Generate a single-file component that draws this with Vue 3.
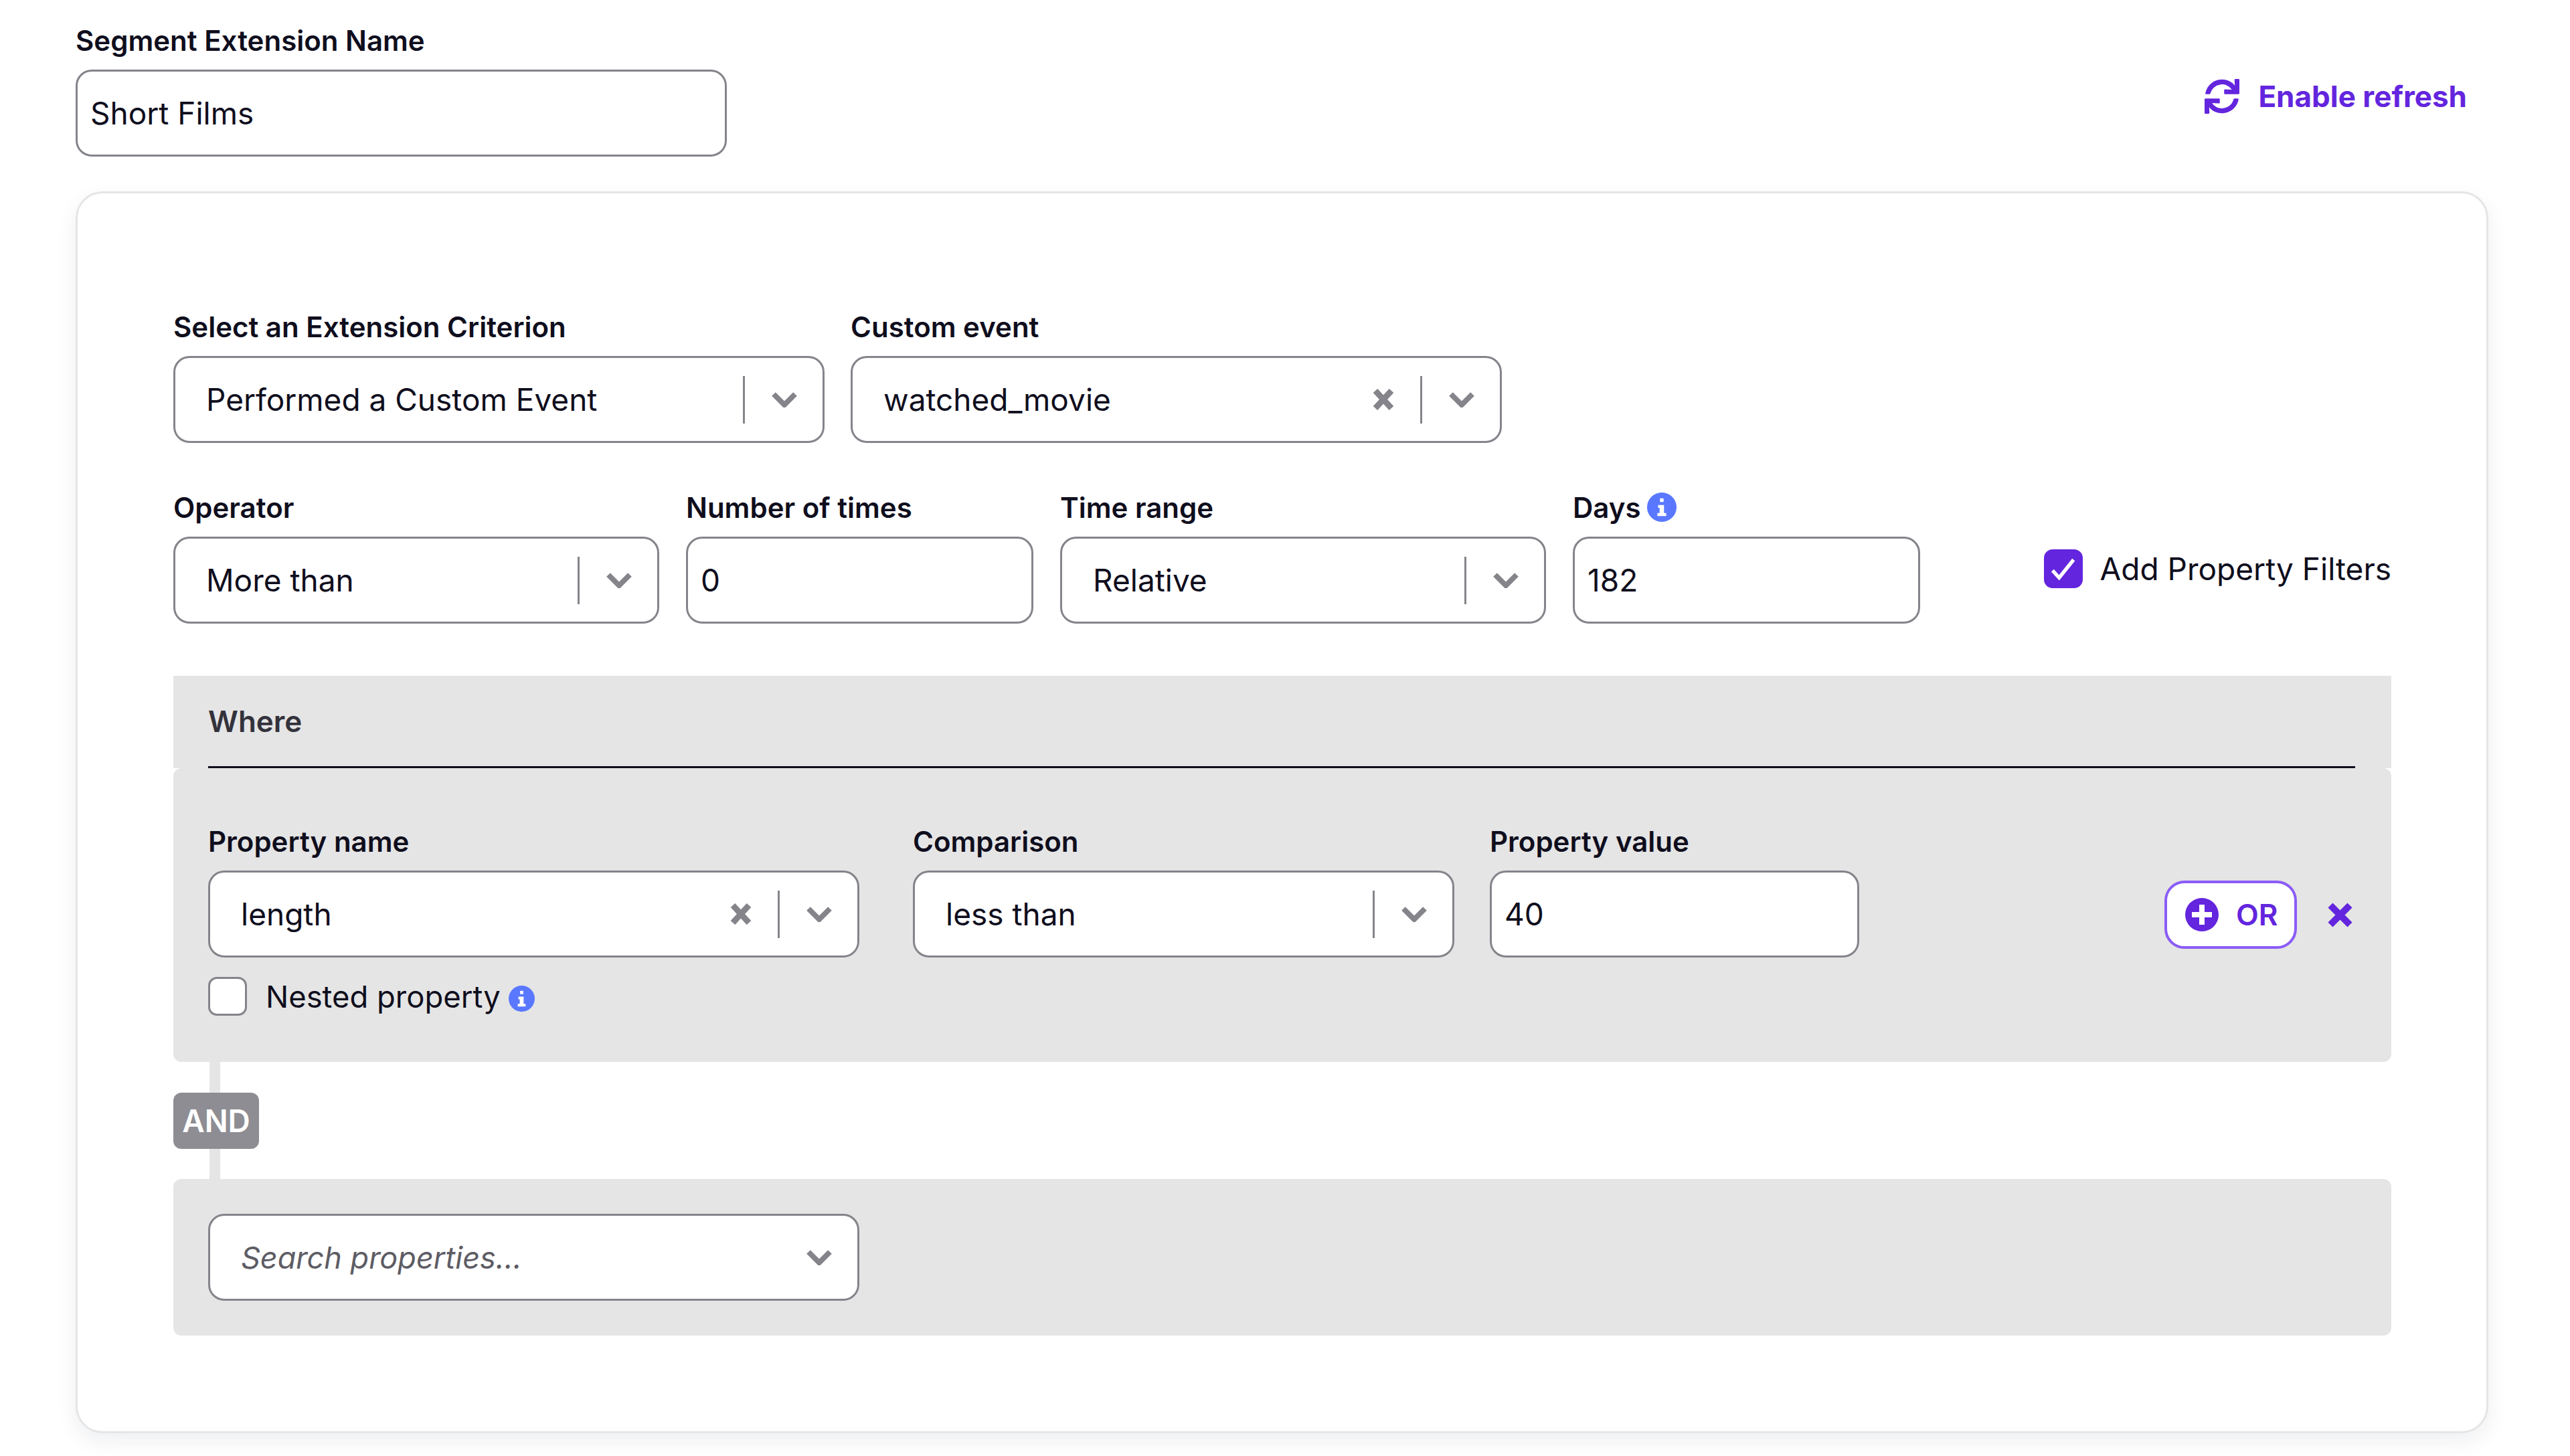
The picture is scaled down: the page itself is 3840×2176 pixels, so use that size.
<script setup>
const syncPath = 'M440.65 12.57l4 82.77A247.16 247.16 0 0 0 255.83 8C134.73 8 33.91 94.92 12.29 209.82A12 12 0 0 0 24.09 224h49.05a12 12 0 0 0 11.67-9.26 175.91 175.91 0 0 1 317-56.94l-101.46-4.86a12 12 0 0 0-12.57 12v47.41a12 12 0 0 0 12 12H500a12 12 0 0 0 12-12V12a12 12 0 0 0-12-12h-47.37a12 12 0 0 0-11.98 12.57zM255.83 432a175.61 175.61 0 0 1-146-77.8l101.8 4.87a12 12 0 0 0 12.57-12v-47.4a12 12 0 0 0-12-12H12a12 12 0 0 0-12 12V500a12 12 0 0 0 12 12h47.35a12 12 0 0 0 12-12.6l-4.15-82.57A247.17 247.17 0 0 0 255.83 504c121.11 0 221.93-86.92 243.55-201.82a12 12 0 0 0-11.8-14.18h-49.05a12 12 0 0 0-11.67 9.26A175.86 175.86 0 0 1 255.83 432z'
</script>

<template>
  <div class="page">
    <div class="top">
      <div class="field name-field">
        <label class="label">Segment Extension Name</label>
        <div class="box input">Short Films</div>
      </div>
      <button class="refresh">
        <svg class="refresh-icon" viewBox="0 0 512 512"><path fill="#6325de" :d="syncPath" /></svg>
        Enable refresh
      </button>
    </div>

    <div class="card">
      <div class="row row-first">
        <div class="field w-973">
          <label class="label">Select an Extension Criterion</label>
          <div class="box select">
            <span class="value">Performed a Custom Event</span>
            <i class="divider"></i>
            <svg class="chevron" viewBox="0 0 38 23"><path d="M3 3l16 16L35 3" /></svg>
          </div>
        </div>
        <div class="field w-973">
          <label class="label">Custom event</label>
          <div class="box select">
            <span class="value">watched_movie</span>
            <svg class="clear" viewBox="0 0 32 32"><path d="M4 3l24 26M28 3L4 29" /></svg>
            <i class="divider"></i>
            <svg class="chevron" viewBox="0 0 38 23"><path d="M3 3l16 16L35 3" /></svg>
          </div>
        </div>
      </div>

      <div class="row row-second">
        <div class="field w-726">
          <label class="label">Operator</label>
          <div class="box select">
            <span class="value">More than</span>
            <i class="divider"></i>
            <svg class="chevron" viewBox="0 0 38 23"><path d="M3 3l16 16L35 3" /></svg>
          </div>
        </div>
        <div class="field w-519">
          <label class="label">Number of times</label>
          <div class="box input">0</div>
        </div>
        <div class="field w-726">
          <label class="label">Time range</label>
          <div class="box select">
            <span class="value">Relative</span>
            <i class="divider"></i>
            <svg class="chevron" viewBox="0 0 38 23"><path d="M3 3l16 16L35 3" /></svg>
          </div>
        </div>
        <div class="field w-519">
          <label class="label">Days
            <svg class="info" viewBox="0 0 40 40">
              <circle cx="20" cy="20" r="20" fill="#5a78ff" />
              <rect x="17.5" y="8" width="5" height="5" rx="1" fill="#fff" />
              <path d="M15 17h8v11h3v4H14v-4h3v-7h-2z" fill="#fff" />
            </svg>
          </label>
          <div class="box input">182</div>
        </div>
        <div class="check-wrap">
          <span class="check checked">
            <svg viewBox="0 0 58 58"><path d="M11 32l11 12L46 14" /></svg>
          </span>
          <span class="check-text">Add Property Filters</span>
        </div>
      </div>

      <div class="where-head">
        <div class="where-title">Where</div>
      </div>
      <div class="where-body">
        <div class="prop-row">
          <div class="field w-973">
            <label class="label">Property name</label>
            <div class="box select">
              <span class="value">length</span>
              <svg class="clear" viewBox="0 0 32 32"><path d="M4 3l24 26M28 3L4 29" /></svg>
              <i class="divider"></i>
              <svg class="chevron" viewBox="0 0 38 23"><path d="M3 3l16 16L35 3" /></svg>
            </div>
          </div>
          <div class="field w-809">
            <label class="label">Comparison</label>
            <div class="box select">
              <span class="value">less than</span>
              <i class="divider"></i>
              <svg class="chevron" viewBox="0 0 38 23"><path d="M3 3l16 16L35 3" /></svg>
            </div>
          </div>
          <div class="field w-552">
            <label class="label">Property value</label>
            <div class="box input">40</div>
          </div>
          <div class="or-wrap">
            <button class="or-btn">
              <svg class="or-plus" viewBox="0 0 50 50">
                <circle cx="25" cy="25" r="25" fill="#6325de" />
                <path d="M21 10h8v11h11v8H29v11h-8V29H10v-8h11z" fill="#fff" />
              </svg>
              OR
            </button>
            <svg class="or-remove" viewBox="0 0 37 37"><path d="M4 4l29 29M33 4L4 33" /></svg>
          </div>
        </div>
        <div class="nested">
          <span class="check"></span>
          <span class="check-text">Nested property</span>
          <svg class="info info-small" viewBox="0 0 40 40">
            <circle cx="20" cy="20" r="20" fill="#5a78ff" />
            <rect x="17.5" y="8" width="5" height="5" rx="1" fill="#fff" />
            <path d="M15 17h8v11h3v4H14v-4h3v-7h-2z" fill="#fff" />
          </svg>
        </div>
      </div>

      <div class="connector">
        <span class="and">AND</span>
      </div>

      <div class="search-block">
        <div class="box select w-973">
          <span class="value placeholder">Search properties...</span>
          <svg class="chevron" viewBox="0 0 38 23"><path d="M3 3l16 16L35 3" /></svg>
        </div>
      </div>
    </div>
  </div>
</template>

<style scoped>
.page {
  box-sizing: border-box;
  width: 3840px;
  height: 2176px;
  padding: 30px 122px 0 113px;
  overflow: hidden;
  background: #fff;
  font-family: Inter, "Liberation Sans", sans-serif;
  font-size: 46px;
  color: #0f0e1d;
}

.top {
  display: flex;
  justify-content: space-between;
  align-items: center;
}

.name-field {
  width: 973px;
}

.field {
  display: flex;
  flex-direction: column;
  gap: 14px;
  flex: none;
}

.label {
  display: flex;
  align-items: center;
  gap: 9px;
  height: 60px;
  font-size: 42px;
  font-weight: 600;
  white-space: nowrap;
}

.box {
  box-sizing: border-box;
  display: flex;
  align-items: center;
  height: 130px;
  background: #fff;
  border: 3px solid #85848b;
  border-radius: 24px;
}

.input {
  padding-left: 19px;
}

.select {
  padding: 0 38px 0 46px;
}

.value {
  flex: 1;
  white-space: nowrap;
}

.placeholder {
  font-size: 45px;
  font-style: italic;
  color: #5d5c64;
}

.divider {
  width: 3px;
  height: 71px;
  margin: 0 40px 0 39px;
  background: #85848b;
}

.chevron {
  width: 38px;
  height: 23px;
  fill: none;
  stroke: #85848b;
  stroke-width: 8;
}

.clear {
  width: 32px;
  height: 32px;
  fill: none;
  stroke: #85848b;
  stroke-width: 9;
}

.refresh {
  display: flex;
  align-items: center;
  gap: 28px;
  margin: 24px 32px 0 0;
  padding: 0;
  border: 0;
  background: none;
  font: inherit;
  font-size: 44px;
  font-weight: 700;
  color: #6325de;
}

.refresh-icon {
  width: 52px;
  height: 52px;
}

.card {
  box-sizing: border-box;
  height: 1856px;
  margin-top: 52px;
  padding: 169px 142px 0 143px;
  background: #fff;
  border: 3px solid #e5e5e5;
  border-radius: 40px;
  box-shadow: 0 12px 32px rgba(20, 30, 60, 0.07);
}

.row {
  display: flex;
}

.row-first {
  gap: 39px;
}

.row-second {
  gap: 40px;
  margin-top: 66px;
}

.w-973 { width: 973px; }
.w-726 { width: 726px; }
.w-519 { width: 519px; }
.w-809 { width: 809px; }
.w-552 { width: 552px; }

.check-wrap {
  display: flex;
  align-items: center;
  gap: 26px;
  margin: 93px 0 0 auto;
  height: 58px;
}

.check {
  box-sizing: border-box;
  display: block;
  flex: none;
  width: 58px;
  height: 58px;
  background: #fff;
  border: 3px solid #85848b;
  border-radius: 13px;
}

.checked {
  background: #6325de;
  border-color: #6325de;
}

.checked svg {
  display: block;
  width: 52px;
  height: 52px;
  fill: none;
  stroke: #fff;
  stroke-width: 6;
}

.check-text {
  white-space: nowrap;
}

.info {
  flex: none;
  width: 44px;
  height: 44px;
}

.info-small {
  width: 39px;
  height: 39px;
  margin: 6px 0 0 -16px;
}

.where-head {
  margin-top: 78px;
  padding: 0 54px 0 52px;
  background: #e5e5e5;
}

.where-title {
  display: flex;
  align-items: center;
  box-sizing: border-box;
  height: 138px;
  border-bottom: 3px solid #0f0e1d;
  font-size: 44px;
  font-weight: 600;
  color: #33323c;
}

.where-body {
  box-sizing: border-box;
  height: 439px;
  padding: 79px 54px 0 52px;
  background: #e5e5e5;
  border-radius: 12px;
}

.prop-row {
  display: flex;
}

.prop-row .w-809 {
  margin-left: 80px;
}

.prop-row .w-552 {
  margin-left: 53px;
}

.or-wrap {
  display: flex;
  align-items: center;
  gap: 46px;
  height: 102px;
  margin: 89px 4px 0 auto;
}

.or-btn {
  box-sizing: border-box;
  display: flex;
  align-items: center;
  gap: 26px;
  width: 198px;
  height: 102px;
  padding: 0 0 0 27px;
  background: #fff;
  border: 4px solid #8b5cf6;
  border-radius: 30px;
  font: inherit;
  font-size: 44px;
  font-weight: 600;
  color: #6325de;
}

.or-plus {
  width: 50px;
  height: 50px;
}

.or-remove {
  width: 37px;
  height: 37px;
  fill: none;
  stroke: #6325de;
  stroke-width: 10;
}

.nested {
  display: flex;
  align-items: center;
  gap: 28px;
  margin-top: 29px;
  font-size: 45.4px;
}

.connector {
  display: flex;
  align-items: center;
  height: 175px;
  background: linear-gradient(#e5e5e5, #e5e5e5) 54px 0 / 16px 100% no-repeat;
}

.and {
  box-sizing: border-box;
  display: flex;
  align-items: center;
  justify-content: center;
  width: 128px;
  height: 84px;
  background: #8e8d93;
  border-radius: 12px;
  font-size: 46px;
  font-weight: 600;
  color: #fff;
}

.search-block {
  box-sizing: border-box;
  height: 234px;
  padding: 52px 0 0 52px;
  background: #e5e5e5;
  border-radius: 12px;
}

.search-block .select {
  justify-content: space-between;
}
</style>
